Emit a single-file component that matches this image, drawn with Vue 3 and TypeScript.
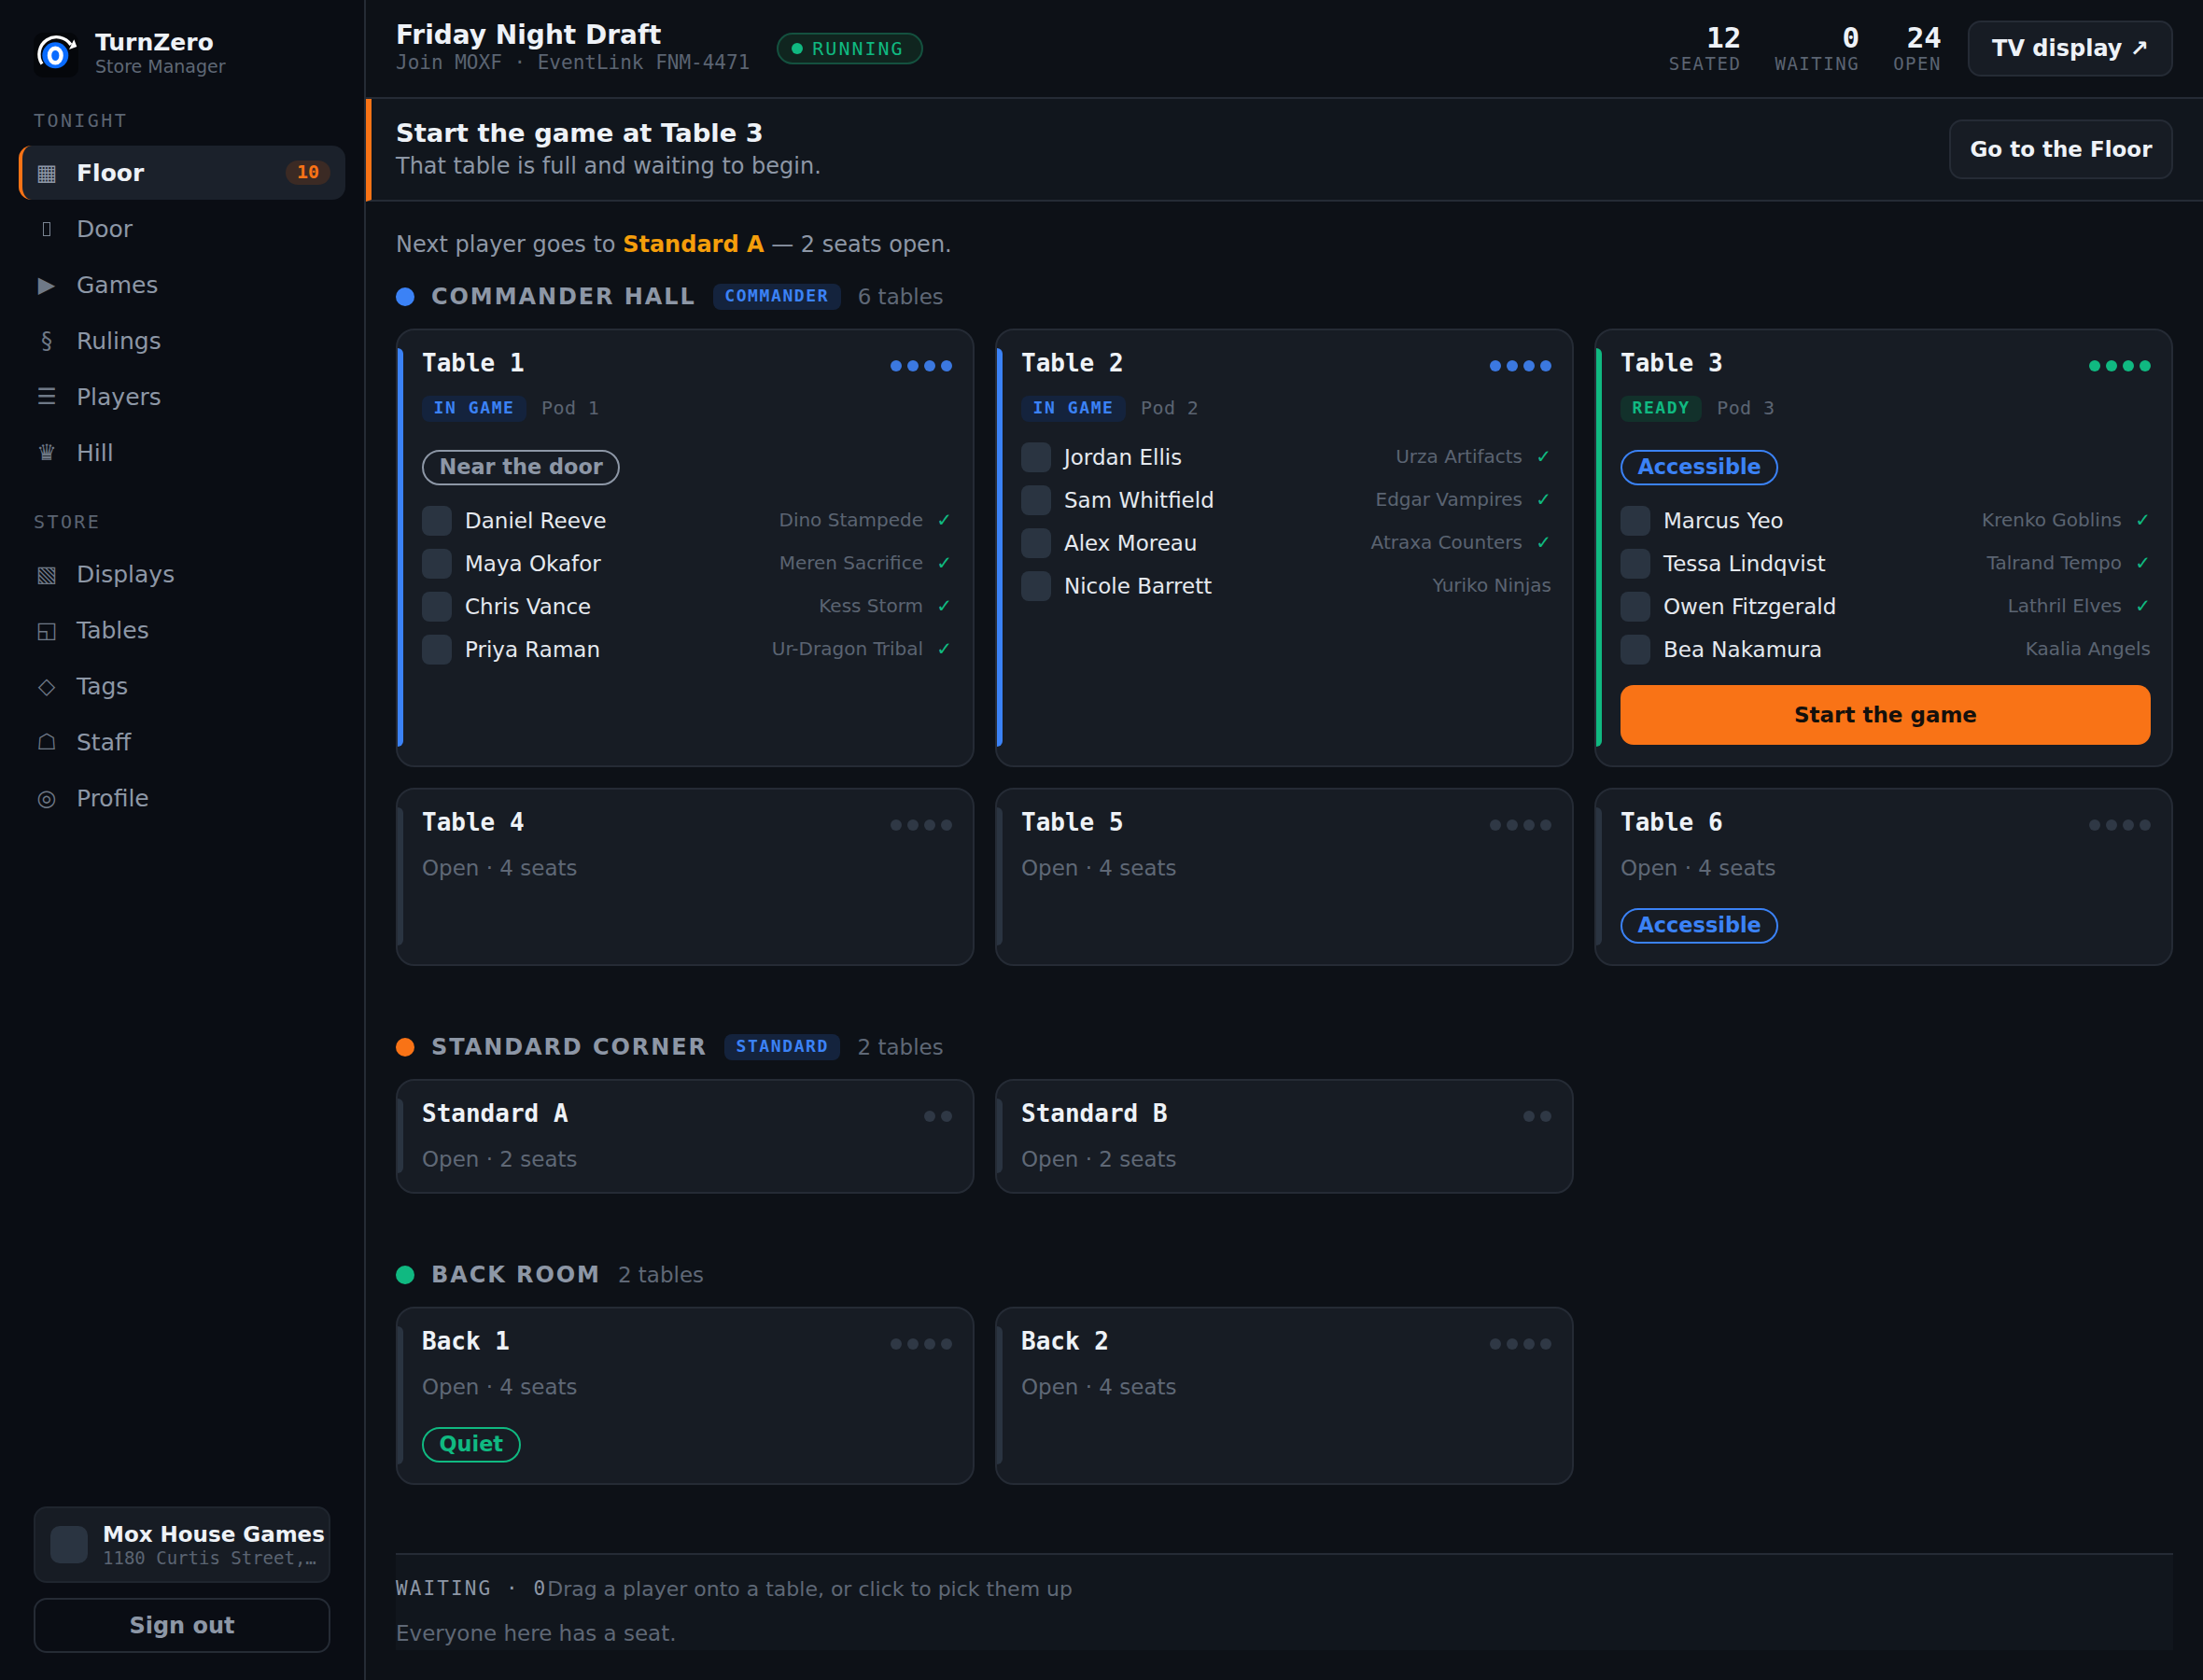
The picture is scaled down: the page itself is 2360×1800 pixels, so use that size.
<script setup lang="ts">
type Player = { name: string; deck: string; ok: boolean }
type Table = {
  name: string
  seats: number
  tone: 'blue' | 'green' | 'idle'
  status?: string
  pod?: string
  open?: string
  tag?: { label: string; tone: string }
  players?: Player[]
  start?: boolean
}
type Section = {
  title: string
  dot: string
  badge?: string
  count: string
  tables: Table[]
}

const tonight = [
  { icon: '▦', label: 'Floor', active: true, badge: '10' },
  { icon: '', label: 'Door' }, // empty box, drawn in css
  { icon: '▶', label: 'Games' },
  { icon: '§', label: 'Rulings' },
  { icon: '☰', label: 'Players' },
  { icon: '♛', label: 'Hill' },
]
const store = [
  { icon: '▧', label: 'Displays' },
  { icon: '◱', label: 'Tables' },
  { icon: '◇', label: 'Tags' },
  { icon: '☖', label: 'Staff' },
  { icon: '◎', label: 'Profile' },
]
const stats = [
  { value: '12', label: 'SEATED' },
  { value: '0', label: 'WAITING' },
  { value: '24', label: 'OPEN' },
]

const sections: Section[] = [
  {
    title: 'COMMANDER HALL',
    dot: 'blue',
    badge: 'COMMANDER',
    count: '6 tables',
    tables: [
      {
        name: 'Table 1', seats: 4, tone: 'blue', status: 'IN GAME', pod: 'Pod 1',
        tag: { label: 'Near the door', tone: 'grey' },
        players: [
          { name: 'Daniel Reeve', deck: 'Dino Stampede', ok: true },
          { name: 'Maya Okafor', deck: 'Meren Sacrifice', ok: true },
          { name: 'Chris Vance', deck: 'Kess Storm', ok: true },
          { name: 'Priya Raman', deck: 'Ur-Dragon Tribal', ok: true },
        ],
      },
      {
        name: 'Table 2', seats: 4, tone: 'blue', status: 'IN GAME', pod: 'Pod 2',
        players: [
          { name: 'Jordan Ellis', deck: 'Urza Artifacts', ok: true },
          { name: 'Sam Whitfield', deck: 'Edgar Vampires', ok: true },
          { name: 'Alex Moreau', deck: 'Atraxa Counters', ok: true },
          { name: 'Nicole Barrett', deck: 'Yuriko Ninjas', ok: false },
        ],
      },
      {
        name: 'Table 3', seats: 4, tone: 'green', status: 'READY', pod: 'Pod 3', start: true,
        tag: { label: 'Accessible', tone: 'blue' },
        players: [
          { name: 'Marcus Yeo', deck: 'Krenko Goblins', ok: true },
          { name: 'Tessa Lindqvist', deck: 'Talrand Tempo', ok: true },
          { name: 'Owen Fitzgerald', deck: 'Lathril Elves', ok: true },
          { name: 'Bea Nakamura', deck: 'Kaalia Angels', ok: false },
        ],
      },
      { name: 'Table 4', seats: 4, tone: 'idle', open: 'Open · 4 seats' },
      { name: 'Table 5', seats: 4, tone: 'idle', open: 'Open · 4 seats' },
      { name: 'Table 6', seats: 4, tone: 'idle', open: 'Open · 4 seats', tag: { label: 'Accessible', tone: 'blue' } },
    ],
  },
  {
    title: 'STANDARD CORNER',
    dot: 'orange',
    badge: 'STANDARD',
    count: '2 tables',
    tables: [
      { name: 'Standard A', seats: 2, tone: 'idle', open: 'Open · 2 seats' },
      { name: 'Standard B', seats: 2, tone: 'idle', open: 'Open · 2 seats' },
    ],
  },
  {
    title: 'BACK ROOM',
    dot: 'green',
    count: '2 tables',
    tables: [
      { name: 'Back 1', seats: 4, tone: 'idle', open: 'Open · 4 seats', tag: { label: 'Quiet', tone: 'green' } },
      { name: 'Back 2', seats: 4, tone: 'idle', open: 'Open · 4 seats' },
    ],
  },
]
</script>

<template>
  <div class="shell">
    <aside class="side">
      <div class="brand">
        <svg class="logo" width="48" height="48" viewBox="0 0 48 48">
          <rect width="48" height="48" rx="10" fill="#05070b" />
          <path d="M9 33.5A17 17 0 0 1 40 13" fill="none" stroke="#fff" stroke-width="3.4" />
          <polygon points="43.3,7.3 46.3,15 38,18" fill="#fff" />
          <circle cx="23.3" cy="24.3" r="14" fill="#0a6cff" />
          <ellipse cx="23.3" cy="24.5" rx="6.3" ry="7.8" fill="none" stroke="#fff" stroke-width="4.4" />
        </svg>
        <div class="brand-text">
          <div class="brand-name">TurnZero</div>
          <div class="brand-sub">Store Manager</div>
        </div>
      </div>

      <div class="nav-label first">TONIGHT</div>
      <nav class="nav">
        <a v-for="item in tonight" :key="item.label" class="nav-item" :class="{ active: item.active }">
          <span class="nav-icon">
            <template v-if="item.icon">{{ item.icon }}</template>
            <i v-else class="nav-box"></i>
          </span>
          <span class="nav-text">{{ item.label }}</span>
          <span v-if="item.badge" class="nav-badge">{{ item.badge }}</span>
        </a>
      </nav>

      <div class="nav-label">STORE</div>
      <nav class="nav">
        <a v-for="item in store" :key="item.label" class="nav-item">
          <span class="nav-icon">{{ item.icon }}</span>
          <span class="nav-text">{{ item.label }}</span>
        </a>
      </nav>

      <div class="side-foot">
        <div class="venue">
          <div class="venue-pic"></div>
          <div class="venue-text">
            <div class="venue-name">Mox House Games</div>
            <div class="venue-addr">1180 Curtis Street, Denver</div>
          </div>
        </div>
        <button class="signout">Sign out</button>
      </div>
    </aside>

    <main class="main">
      <header class="top">
        <div class="event">
          <div class="event-name">Friday Night Draft</div>
          <div class="event-sub">Join MOXF · EventLink FNM-4471</div>
        </div>
        <div class="running"><i></i>RUNNING</div>
        <div class="stats">
          <div v-for="s in stats" :key="s.label" class="stat">
            <div class="stat-value">{{ s.value }}</div>
            <div class="stat-label">{{ s.label }}</div>
          </div>
        </div>
        <button class="ghost tv">TV display ↗</button>
      </header>

      <section class="banner">
        <div>
          <div class="banner-title">Start the game at Table 3</div>
          <div class="banner-sub">That table is full and waiting to begin.</div>
        </div>
        <button class="ghost floor">Go to the Floor</button>
      </section>

      <div class="content">
        <p class="next">Next player goes to <b>Standard A</b> — 2 seats open.</p>

        <section v-for="sec in sections" :key="sec.title" class="zone">
          <div class="zone-head">
            <i class="zone-dot" :class="sec.dot"></i>
            <span class="zone-title">{{ sec.title }}</span>
            <span v-if="sec.badge" class="chip blue">{{ sec.badge }}</span>
            <span class="zone-count">{{ sec.count }}</span>
          </div>
          <div class="grid">
            <article v-for="t in sec.tables" :key="t.name" class="card" :class="t.tone">
              <div class="card-head">
                <span class="card-name">{{ t.name }}</span>
                <span class="seats">
                  <i v-for="n in t.seats" :key="n"></i>
                </span>
              </div>
              <div v-if="t.status" class="status">
                <span class="chip" :class="t.tone">{{ t.status }}</span>
                <span class="pod">{{ t.pod }}</span>
              </div>
              <div v-if="t.open" class="open">{{ t.open }}</div>
              <div v-if="t.tag" class="tag-row">
                <span class="tag" :class="t.tag.tone">{{ t.tag.label }}</span>
              </div>
              <ul v-if="t.players" class="players">
                <li v-for="p in t.players" :key="p.name">
                  <i class="pic"></i>
                  <span class="player">{{ p.name }}</span>
                  <span class="deck">{{ p.deck }}</span>
                  <span v-if="p.ok" class="check">✓</span>
                </li>
              </ul>
              <button v-if="t.start" class="start">Start the game</button>
            </article>
          </div>
        </section>

        <div class="waiting">
          <div class="waiting-top"><span class="waiting-label">WAITING · 0</span><span class="waiting-hint">Drag a player onto a table, or click to pick them up</span></div>
          <div class="waiting-note">Everyone here has a seat.</div>
        </div>
      </div>
    </main>
  </div>
</template>

<style>
html,
body {
  margin: 0;
  background: #0d1117;
}
</style>

<style scoped>
* {
  box-sizing: border-box;
}

.shell {
  display: flex;
  width: 2360px;
  height: 1800px;
  overflow: hidden;
  background: #0d1117;
  color: #eef2f7;
  font-family: "DejaVu Sans", sans-serif;
}

/* sidebar */
.side {
  width: 392px;
  flex: none;
  display: flex;
  flex-direction: column;
  padding: 35px 20px 29px;
  background: #0a0d14;
  border-right: 2px solid #252b35;
}

.brand {
  display: flex;
  align-items: center;
  gap: 18px;
  padding-left: 16px;
  height: 48px;
}

.brand-text {
  margin-top: -5px;
}

.brand-name {
  font-size: 25px;
  font-weight: 700;
  line-height: 30px;
}

.brand-sub {
  font-size: 19px;
  line-height: 21px;
  color: #5f6876;
}

.nav-label {
  margin: 32px 0 0 16px;
  height: 26px;
  font: 20px/26px "DejaVu Sans Mono", monospace;
  letter-spacing: 2.4px;
  color: #5b6472;
}

.nav-label.first {
  margin-top: 33px;
}

.nav {
  display: flex;
  flex-direction: column;
  gap: 2px;
  margin-top: 14px;
}

.nav-item {
  display: flex;
  align-items: center;
  height: 58px;
  padding: 0 16px 0 14px;
  border-left: 4px solid transparent;
  border-radius: 14px;
  font-size: 25px;
  color: #8d97a6;
}

.nav-item.active {
  background: #1b212b;
  border-left-color: #f97316;
  color: #eef2f7;
  font-weight: 700;
}

.nav-icon {
  display: flex;
  align-items: center;
  justify-content: center;
  width: 24px;
  margin-right: 20px;
  font-size: 24px;
  font-weight: 400;
  color: #6f7987;
}

.active .nav-icon {
  color: #8d97a6;
}

.nav-box {
  width: 8px;
  height: 15px;
  margin-top: 1px;
  border: 1px solid #7a8492;
}

.nav-text {
  flex: 1;
}

.nav-badge {
  width: 48px;
  height: 26px;
  border-radius: 13px;
  background: #3b2a24;
  color: #f97316;
  text-align: center;
  font: 700 20px/24px "DejaVu Sans Mono", monospace;
}

.side-foot {
  margin-top: auto;
  padding: 0 16px;
  display: flex;
  flex-direction: column;
  gap: 16px;
}

.venue {
  display: flex;
  align-items: center;
  gap: 16px;
  height: 82px;
  padding: 0 0 0 16px;
  background: #171c24;
  border: 2px solid #1f252e;
  border-radius: 14px;
}

.venue-pic {
  width: 40px;
  height: 40px;
  flex: none;
  border-radius: 10px;
  background: #2a3441;
}

.venue-text {
  min-width: 0;
  flex: 1;
}

.venue-name {
  font-size: 23px;
  font-weight: 700;
  line-height: 27px;
  white-space: nowrap;
}

.venue-addr {
  width: 230px;
  font: 19px/22px "DejaVu Sans Mono", monospace;
  color: #5b6472;
  white-space: nowrap;
  overflow: hidden;
  text-overflow: ellipsis;
}

.signout {
  height: 59px;
  border: 2px solid #252b35;
  border-radius: 14px;
  background: transparent;
  color: #8d97a6;
  font: 700 24px "DejaVu Sans", sans-serif;
}

/* top bar */
.main {
  flex: 1;
  min-width: 0;
  display: flex;
  flex-direction: column;
}

.top {
  display: flex;
  align-items: center;
  height: 106px;
  padding: 0 32px;
  border-bottom: 2px solid #252b35;
}

.event {
  margin-top: -5px;
}

.event-name {
  font-size: 28px;
  font-weight: 700;
  line-height: 34px;
}

.event-sub {
  font: 21px/24px "DejaVu Sans Mono", monospace;
  color: #5b6472;
}

.running {
  display: flex;
  align-items: center;
  gap: 10px;
  height: 34px;
  margin-left: 29px;
  padding: 0 18px 0 14px;
  border: 2px solid #14513f;
  border-radius: 17px;
  background: #10251f;
  color: #10b981;
  font: 20px "DejaVu Sans Mono", monospace;
  letter-spacing: 2px;
}

.running i {
  width: 12px;
  height: 12px;
  border-radius: 50%;
  background: #10b981;
}

.stats {
  display: flex;
  gap: 36px;
  margin: -3px 28px 0 auto;
  text-align: right;
}

.stat-value {
  font: 700 31px/34px "DejaVu Sans Mono", monospace;
}

.stat-label {
  font: 19px/22px "DejaVu Sans Mono", monospace;
  letter-spacing: 1.52px;
  color: #5b6472;
}

.ghost {
  border: 2px solid #252b35;
  border-radius: 14px;
  background: #171c24;
  color: #eef2f7;
  font: 700 24px "DejaVu Sans", sans-serif;
}

.tv {
  width: 220px;
  height: 60px;
}

.floor {
  width: 240px;
  height: 64px;
  font-size: 23px;
}

/* banner */
.banner {
  display: flex;
  align-items: center;
  justify-content: space-between;
  height: 110px;
  padding: 0 32px 0 26px;
  background: #11161d;
  border-left: 6px solid #f97316;
  border-bottom: 2px solid #252b35;
}

.banner-title {
  font-size: 27.4px;
  font-weight: 700;
  line-height: 36px;
}

.banner-sub {
  font-size: 24px;
  line-height: 34px;
  color: #8d97a6;
}

/* floor */
.content {
  flex: 1;
  padding: 0 32px;
  display: flex;
  flex-direction: column;
}

.next {
  margin: 30px 0 0;
  font-size: 24px;
  line-height: 32px;
  color: #8d97a6;
}

.next b {
  color: #f59e0b;
}

.zone {
  margin-top: 73px;
}

.next + .zone {
  margin-top: 26px;
}

.zone-head {
  display: flex;
  align-items: center;
  height: 28px;
  margin-bottom: 20px;
}

.zone-dot {
  width: 20px;
  height: 20px;
  border-radius: 50%;
  margin-right: 18px;
}

.zone-dot.blue {
  background: #3b82f6;
}

.zone-dot.orange {
  background: #f97316;
}

.zone-dot.green {
  background: #10b981;
}

.zone-title {
  font-size: 24px;
  font-weight: 700;
  letter-spacing: 1.92px;
  color: #8d97a6;
}

.zone-count {
  margin-left: 18px;
  font-size: 23px;
  color: #5f6876;
}

.chip {
  height: 28px;
  padding: 0 12.5px;
  border-radius: 8px;
  font: 700 18px/26px "DejaVu Sans Mono", monospace;
  letter-spacing: 1.6px;
}

.chip.blue {
  background: #14233d;
  color: #3b82f6;
}

.chip.green {
  background: #12312b;
  color: #10b981;
}

.zone-head .chip {
  margin-left: 18px;
}

.grid {
  display: grid;
  grid-template-columns: repeat(3, 620px);
  gap: 22px;
}

.card {
  position: relative;
  padding: 22px 22px 22px 26px;
  background: #171c24;
  border: 2px solid #252b35;
  border-radius: 20px;
}

.card::before {
  content: "";
  position: absolute;
  left: 0;
  top: 19px;
  bottom: 20px;
  width: 6px;
  border-radius: 0 6px 6px 0;
  background: #2a3441;
}

.card.blue::before {
  background: #3b82f6;
}

.card.green::before {
  background: #10b981;
}

.card-head {
  display: flex;
  align-items: center;
  justify-content: space-between;
  height: 32px;
}

.card-name {
  font: 700 26px/32px "DejaVu Sans Mono", monospace;
  margin-top: -6px;
}

.seats {
  display: flex;
  gap: 6px;
}

.seats i {
  width: 12px;
  height: 12px;
  border-radius: 50%;
  background: #2f3845;
}

.blue .seats i {
  background: #3b78e0;
}

.green .seats i {
  background: #10b981;
}

.status {
  display: flex;
  align-items: center;
  gap: 16px;
  margin-top: 16px;
}

.pod {
  margin-top: -2px;
  font: 20px "DejaVu Sans Mono", monospace;
  letter-spacing: 0.4px;
  color: #5b6472;
}

.open {
  margin-top: 16px;
  padding-top: 2px;
  font-size: 23px;
  line-height: 25px;
  color: #5f6876;
}

.tag-row {
  display: flex;
  margin-top: 30px;
}

.tag {
  height: 38px;
  padding: 0 16.5px;
  border: 2px solid;
  border-radius: 19px;
  font-size: 22.4px;
  font-weight: 700;
  line-height: 33px;
}

.tag.grey {
  color: #8d97a6;
}

.tag.blue {
  color: #3b82f6;
}

.tag.green {
  color: #10b981;
}

.players {
  list-style: none;
  margin: 22px 0 0;
  padding: 0;
  display: flex;
  flex-direction: column;
  gap: 14px;
}

.players li {
  display: flex;
  align-items: center;
  height: 32px;
}

.pic {
  width: 32px;
  height: 32px;
  margin-right: 14px;
  border-radius: 8px;
  background: #2a3441;
}

.player {
  flex: 1;
  font-size: 23px;
  color: #e5e9ef;
}

.deck {
  margin-top: -2px;
  font-size: 20px;
  color: #5b6472;
}

.check {
  width: 18px;
  margin: -2px 0 0 13px;
  font-size: 20px;
  line-height: 26px;
  color: #10b981;
  text-align: right;
}

.start {
  display: block;
  width: 100%;
  height: 64px;
  margin-top: 22px;
  border: 0;
  border-radius: 14px;
  background: #f97316;
  color: #14100c;
  font: 700 23px "DejaVu Sans", sans-serif;
}

/* waiting strip */
.waiting {
  height: 104px;
  margin-top: 73px;
  padding-top: 22px;
  background: #11161d;
  border-top: 2px solid #252b35;
  color: #5f6876;
  font-size: 23px;
}

.waiting-top {
  display: flex;
  align-items: center;
  height: 28px;
}

.waiting-label {
  font: 21px "DejaVu Sans Mono", monospace;
  letter-spacing: 2.1px;
  color: #8d97a6;
}

.waiting-hint {
  font-size: 22px;
}

.waiting-note {
  margin-top: 20px;
  line-height: 28px;
}
</style>
